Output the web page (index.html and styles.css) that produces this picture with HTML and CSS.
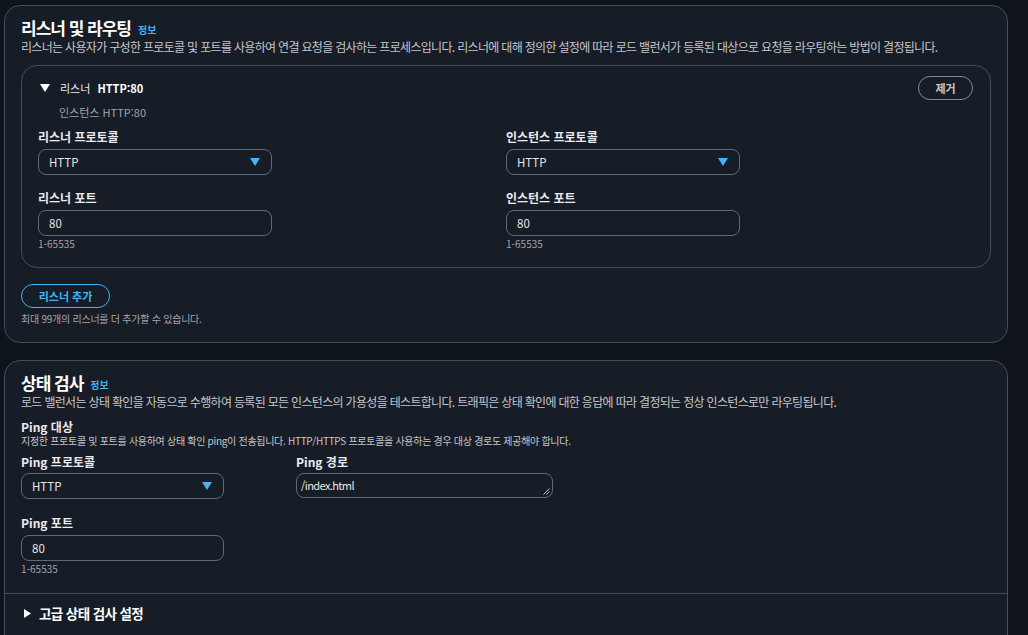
FILE: index.html
```html
<!DOCTYPE html>
<html lang="ko">
<head>
<meta charset="utf-8">
<title>리스너 및 라우팅</title>
<link rel="stylesheet" href="styles.css">
</head>
<body>
<div class="page">
  <section class="panel">
    <div class="panel-head">
      <h2 class="title"><span>리스너 및 라우팅</span><a class="info">정보</a></h2>
      <p class="desc">리스너는 사용자가 구성한 프로토콜 및 포트를 사용하여 연결 요청을 검사하는 프로세스입니다. 리스너에 대해 정의한 설정에 따라 로드 밸런서가 등록된 대상으로 요청을 라우팅하는 방법이 결정됩니다.</p>
    </div>
    <div class="listener">
      <div class="listener-head">
        <div class="listener-title">
          <svg class="caret-down" width="10" height="8" viewBox="0 0 10 8"><path d="M0 0 H10 L5 8 Z" fill="#ffffff"/></svg>
          <span class="lt-name">리스너</span>
          <span class="lt-value">HTTP:80</span>
        </div>
        <button class="btn-normal">제거</button>
      </div>
      <div class="listener-sub">인스턴스 HTTP:80</div>
      <div class="grid2">
        <div class="field">
          <div class="label">리스너 프로토콜</div>
          <div class="select w234"><span>HTTP</span><svg width="10" height="8" viewBox="0 0 10 8"><path d="M0 0 H10 L5 8 Z" fill="#42b4ff"/></svg></div>
        </div>
        <div class="field">
          <div class="label">인스턴스 프로토콜</div>
          <div class="select w234"><span>HTTP</span><svg width="10" height="8" viewBox="0 0 10 8"><path d="M0 0 H10 L5 8 Z" fill="#42b4ff"/></svg></div>
        </div>
        <div class="field gap-top">
          <div class="label">리스너 포트</div>
          <div class="input w234">80</div>
          <div class="hint">1-65535</div>
        </div>
        <div class="field gap-top">
          <div class="label">인스턴스 포트</div>
          <div class="input w234">80</div>
          <div class="hint">1-65535</div>
        </div>
      </div>
    </div>
    <button class="btn-add">리스너 추가</button>
    <div class="hint add-hint">최대 99개의 리스너를 더 추가할 수 있습니다.</div>
  </section>

  <section class="panel panel2">
    <div class="panel-head">
      <h2 class="title"><span>상태 검사</span><a class="info">정보</a></h2>
      <p class="desc">로드 밸런서는 상태 확인을 자동으로 수행하여 등록된 모든 인스턴스의 가용성을 테스트합니다. 트래픽은 상태 확인에 대한 응답에 따라 결정되는 정상 인스턴스로만 라우팅됩니다.</p>
    </div>
    <div class="ping-target">
      <div class="label">Ping 대상</div>
      <div class="sub-desc">지정한 프로토콜 및 포트를 사용하여 상태 확인 ping이 전송됩니다. HTTP/HTTPS 프로토콜을 사용하는 경우 대상 경로도 제공해야 합니다.</div>
    </div>
    <div class="ping-grid">
      <div class="field">
        <div class="label">Ping 프로토콜</div>
        <div class="select w203"><span>HTTP</span><svg width="10" height="8" viewBox="0 0 10 8"><path d="M0 0 H10 L5 8 Z" fill="#42b4ff"/></svg></div>
      </div>
      <div class="field">
        <div class="label">Ping 경로</div>
        <div class="textarea"><span>/index.html</span><svg class="grip" width="7" height="7" viewBox="0 0 7 7"><path d="M6.5 0.5 L0.5 6.5 M6.5 3.5 L3.5 6.5" stroke="#c6c6cd" stroke-width="1"/></svg></div>
      </div>
      <div class="field gap-top2">
        <div class="label">Ping 포트</div>
        <div class="input w203">80</div>
        <div class="hint">1-65535</div>
      </div>
    </div>
    <div class="divider"></div>
    <div class="advanced">
      <svg width="7" height="9" viewBox="0 0 7 9"><path d="M0 0 L7 4.5 L0 9 Z" fill="#ffffff"/></svg>
      <span>고급 상태 검사 설정</span>
    </div>
  </section>
</div>
</body>
</html>
```

FILE: styles.css
```css
* { box-sizing: border-box; }
html, body { margin: 0; padding: 0; }
body {
  background: #0f141a;
  font-family: "Noto Sans CJK KR", "Open Sans", "Noto Sans", sans-serif;
  color: #c6c6cd;
  width: 1028px;
  height: 635px;
  overflow: hidden;
}
.page {
  padding: 5px 20px 0 4px;
}
.panel {
  background: #161d26;
  border: 1px solid #414d5c;
  border-radius: 16px;
  padding: 11px 16px 15px;
}
.panel2 {
  margin-top: 17px;
  padding-bottom: 40px;
}
.title {
  margin: 0;
  display: flex;
  align-items: center;
  height: 22px;
  font-size: 17px;
  line-height: 22px;
  font-weight: 700;
  color: #ffffff;
  letter-spacing: -1px;
}
.info {
  font-size: 10px;
  line-height: 12px;
  font-weight: 700;
  color: #42b4ff;
  margin-left: 7px;
  margin-top: 3px;
  letter-spacing: 0;
}
.desc {
  margin: 0;
  font-size: 12px;
  line-height: 16px;
  color: #c6c6cd;
  letter-spacing: -0.68px;
  white-space: nowrap;
}
.listener {
  margin-top: 10px;
  border: 1px solid #414d5c;
  border-radius: 16px;
  padding: 10px 16px 15px;
}
.listener-head {
  display: flex;
  align-items: center;
  justify-content: space-between;
  height: 24px;
}
.listener-title {
  display: flex;
  align-items: center;
  padding-left: 2px;
  font-size: 11px;
  color: #ebebf0;
}
.caret-down { margin-right: 10px; }
.lt-name { margin-right: 7px; }
.lt-value { font-weight: 700; color: #ffffff; }
.btn-normal {
  height: 24px;
  width: 55px;
  border: 1px solid #7d8998;
  border-radius: 12px;
  background: transparent;
  color: #c6c6cd;
  font-family: inherit;
  font-size: 11px;
  font-weight: 700;
  padding: 0;
  margin-right: 1px;
}
.listener-sub {
  margin-top: 4px;
  padding-left: 21px;
  font-size: 11px;
  line-height: 16px;
  color: #a4a4ad;
}
.grid2 {
  display: grid;
  grid-template-columns: 468px 1fr;
  margin-top: 9px;
}
.field { display: flex; flex-direction: column; }
.gap-top { margin-top: 15px; }
.label {
  font-size: 12px;
  line-height: 16px;
  font-weight: 700;
  color: #ebebf0;
}
.select, .input, .textarea {
  margin-top: 4px;
  height: 26px;
  border: 1px solid #5f6b7a;
  border-radius: 8px;
  display: flex;
  align-items: center;
  justify-content: space-between;
  padding: 0 11px 0 10px;
  font-size: 11.5px;
  color: #e6e6eb;
}
.w234 { width: 234px; }
.w203 { width: 203px; }
.hint {
  font-size: 10px;
  line-height: 16px;
  color: #a4a4ad;
}
.btn-add {
  margin-top: 16px;
  height: 24px;
  width: 89px;
  border: 1.5px solid #42b4ff;
  border-radius: 12px;
  background: transparent;
  color: #42b4ff;
  font-family: inherit;
  font-size: 11px;
  font-weight: 700;
  padding: 0;
  display: block;
}
.add-hint { margin-top: 3px; letter-spacing: -0.25px; }
.ping-target { margin-top: 9px; }
.sub-desc {
  font-size: 10px;
  line-height: 12px;
  color: #c6c6cd;
  letter-spacing: -0.3px;
}
.ping-grid {
  display: grid;
  grid-template-columns: 275px 1fr;
  margin-top: 7px;
}
.ping-grid .select { margin-top: 3px; height: 26px; }
.ping-grid .input { height: 26px; }
.textarea {
  margin-top: 3px;
  width: 257px;
  height: 25px;
  position: relative;
  padding: 3px 3px 0 4px;
  align-items: flex-start;
  letter-spacing: -0.6px;
  font-size: 11px;
}
.grip { position: absolute; right: 2px; bottom: 2px; }
.gap-top2 { margin-top: 16px; }
.divider {
  margin: 16px -16px 0;
  border-top: 1px solid #414d5c;
}
.advanced {
  display: flex;
  align-items: center;
  margin-top: 9px;
  height: 20px;
  padding-left: 3px;
  font-size: 13.5px;
  font-weight: 700;
  color: #ffffff;
  letter-spacing: -0.6px;
}
.advanced svg { margin-right: 8px; }
```
